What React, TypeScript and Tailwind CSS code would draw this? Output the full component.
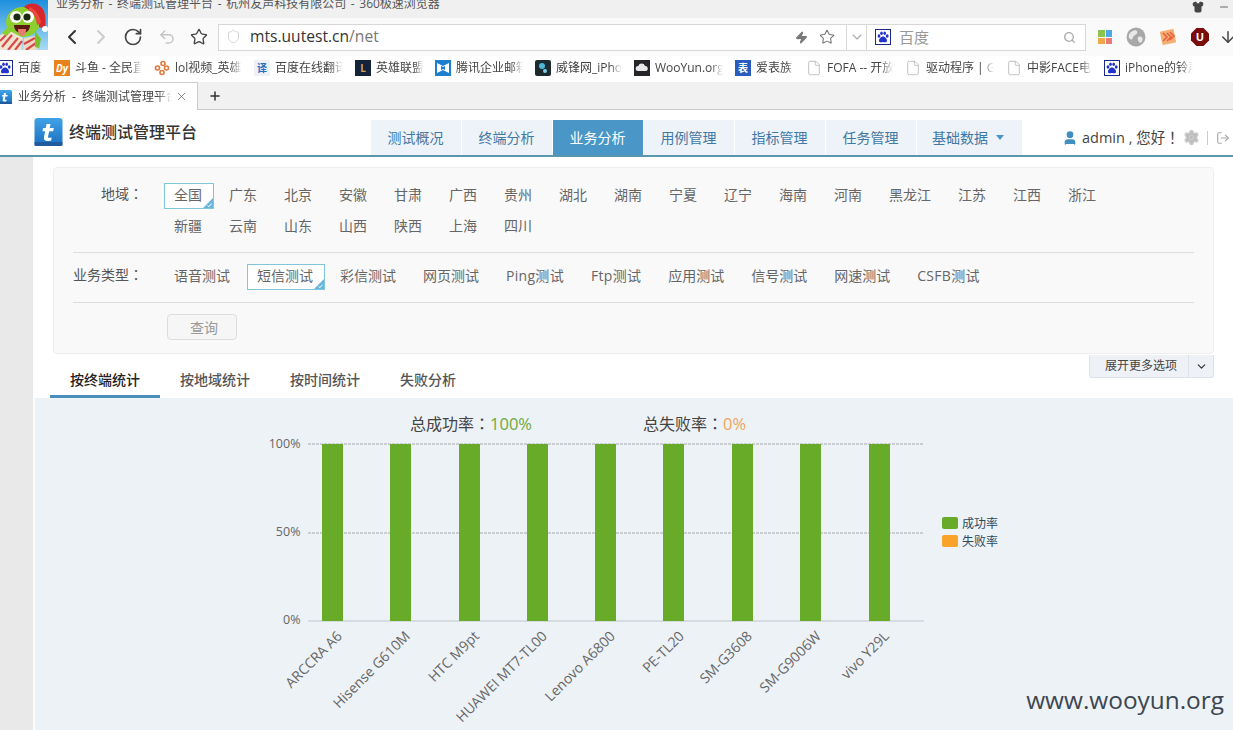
import React from "react";
import { ChevronDown, ChevronLeft, ChevronRight, File, LogOut, Plus, RotateCw, Search, Settings, Shield, Star, Undo2, User, X, Zap, Shirt, Minus, ArrowDown } from "lucide-react";

const Paw = ({ className = "" }: { className?: string }) => (
  <svg viewBox="0 0 16 16" className={className}>
    <rect x="0.5" y="0.5" width="15" height="15" fill="#fff" stroke="#1a2a8c" />
    <g fill="#2233c8">
      <ellipse cx="4" cy="7" rx="1.4" ry="1.8" />
      <ellipse cx="6.5" cy="4.2" rx="1.3" ry="1.8" />
      <ellipse cx="9.7" cy="4.2" rx="1.3" ry="1.8" />
      <ellipse cx="12.2" cy="7" rx="1.4" ry="1.8" />
      <path d="M8 7.5c-2 0-4 2.4-4 4.2 0 1.6 1.6 1.7 4 1.2 2.4.5 4 .4 4-1.2 0-1.8-2-4.2-4-4.2z" />
    </g>
  </svg>
);

const TLogo = ({ className = "" }: { className?: string }) => (
  <svg viewBox="0 0 28 28" className={className}>
    <defs>
      <linearGradient id="tl" x1="0" y1="0" x2="0" y2="1">
        <stop offset="0" stopColor="#3fa3e6" />
        <stop offset="1" stopColor="#1c6fc0" />
      </linearGradient>
    </defs>
    <rect width="28" height="28" rx="3" fill="url(#tl)" />
    <rect y="24" width="28" height="4" rx="1" fill="#1f5c9e" />
    <path d="M12 6h4l-.7 4h4l-.6 3.2h-4l-1.2 5.6c-.2 1 .9 1.2 3.6.6l-.4 3c-5 1.4-8 .4-7.2-3.6l1.2-5.6H8l.6-3.2h2.7z" fill="#fff" />
  </svg>
);

const Box = ({ className, children }: { className: string; children?: React.ReactNode }) => (
  <span className={"flex h-4 w-4 shrink-0 items-center justify-center overflow-hidden text-[10px] leading-none " + className}>{children}</span>
);

const Colon = ({ children = "：" }: { children?: string }) => <span className="font-['Noto_Sans_CJK_TC',sans-serif]">{children}</span>;

const bookmarks: { icon: React.ReactNode; label: string; w: string }[] = [
  { icon: <Paw className="h-4 w-4 shrink-0" />, label: "百度", w: "w-[24px]" },
  { icon: <Box className="bg-[#e8821e] font-bold italic text-white">Dy</Box>, label: "斗鱼 - 全民直播", w: "w-[67px]" },
  {
    icon: (
      <svg viewBox="0 0 16 16" className="h-4 w-4 shrink-0">
        <g fill="none" stroke="#e0783a" strokeWidth="1.6">
          <circle cx="9" cy="3.5" r="2" />
          <circle cx="3.5" cy="8" r="2" />
          <circle cx="12.5" cy="8" r="2" />
          <circle cx="8" cy="12.5" r="2" />
        </g>
      </svg>
    ),
    label: "lol视频_英雄联盟",
    w: "w-[67px]",
  },
  { icon: <Box className="bg-[#eef2f8] font-bold text-[#2a6fc0]">译</Box>, label: "百度在线翻译", w: "w-[68px]" },
  { icon: <Box className="bg-[#14233c] font-bold text-[#d0a850]">L</Box>, label: "英雄联盟", w: "w-[47px]" },
  {
    icon: (
      <svg viewBox="0 0 16 16" className="h-4 w-4 shrink-0">
        <rect width="16" height="16" fill="#1c7fd0" />
        <path d="M2 3l6 3 6-3v10l-6-3-6 3z" fill="#fff" />
        <path d="M6 6l2 1 2-1v4l-2-1-2 1z" fill="#1c7fd0" />
      </svg>
    ),
    label: "腾讯企业邮箱",
    w: "w-[67px]",
  },
  {
    icon: (
      <svg viewBox="0 0 16 16" className="h-4 w-4 shrink-0">
        <rect width="16" height="16" rx="2" fill="#1d2a30" />
        <circle cx="7" cy="6" r="3" fill="#4fb8d8" />
        <circle cx="10" cy="11" r="2" fill="#7fd0e4" />
      </svg>
    ),
    label: "威锋网_iPhone",
    w: "w-[66px]",
  },
  {
    icon: (
      <svg viewBox="0 0 16 16" className="h-4 w-4 shrink-0">
        <rect width="16" height="16" fill="#26262a" />
        <path d="M4 11a2.5 2.5 0 0 1 .3-5A3.5 3.5 0 0 1 11 6a2.5 2.5 0 0 1 .5 5z" fill="#e8e8e8" />
      </svg>
    ),
    label: "WooYun.org",
    w: "w-[68px]",
  },
  { icon: <Box className="bg-[#2a5cc0] font-bold text-white">表</Box>, label: "爱表族", w: "w-[38px]" },
  { icon: <File className="h-4 w-4 shrink-0 text-[#bbbbbb]" strokeWidth={1.3} />, label: "FOFA -- 开放", w: "w-[66px]" },
  { icon: <File className="h-4 w-4 shrink-0 text-[#bbbbbb]" strokeWidth={1.3} />, label: "驱动程序 | GeForce", w: "w-[68px]" },
  { icon: <File className="h-4 w-4 shrink-0 text-[#bbbbbb]" strokeWidth={1.3} />, label: "中影FACE电影", w: "w-[65px]" },
  { icon: <Paw className="h-4 w-4 shrink-0" />, label: "iPhone的铃声", w: "w-[68px]" },
];

const navItems = ["测试概况", "终端分析", "业务分析", "用例管理", "指标管理", "任务管理"];
const regionRows = ["全国", "广东", "北京", "安徽", "甘肃", "广西", "贵州", "湖北", "湖南", "宁夏", "辽宁", "海南", "河南", "黑龙江", "江苏", "江西", "浙江", "新疆", "云南", "山东", "山西", "陕西", "上海", "四川"];
const types = ["语音测试", "短信测试", "彩信测试", "网页测试", "Ping测试", "Ftp测试", "应用测试", "信号测试", "网速测试", "CSFB测试"];
const bars: [number, number, string][] = [
  [322, 332, "ARCCRA A6"],
  [390, 400, "Hisense G610M"],
  [459, 469, "HTC M9pt"],
  [527, 537, "HUAWEI MT7-TL00"],
  [595, 605, "Lenovo A6800"],
  [663, 674, "PE-TL20"],
  [732, 742, "SM-G3608"],
  [800, 811, "SM-G9006W"],
  [869, 879, "vivo Y29L"],
];

const Chip = ({ label, active }: { label: string; active?: boolean }) => (
  <span className={"relative flex h-[26px] items-center border pb-[3px] pl-[9px] pr-[11px] text-[14px] text-[#666] " + (active ? "border-[#7fc6dc] bg-white " : "border-transparent ") + (/[A-Za-z]/.test(label) ? "tracking-[0.3px]" : "")}>
    {label}
    {active && (
      <>
        <span className="absolute bottom-0 right-0 h-0 w-0 border-b-[10px] border-l-[10px] border-b-[#68b6de] border-l-transparent" />
        <svg viewBox="0 0 10 10" className="absolute bottom-0 right-0 h-[10px] w-[10px]">
          <path d="M4.5 7.5l1.4 1.2 2.6-3" fill="none" stroke="#fff" strokeWidth="1" />
        </svg>
      </>
    )}
  </span>
);

const Avatar = () => (
  <svg viewBox="0 0 48 50" className="absolute left-0 top-0 h-[50px] w-[48px]">
    <defs>
      <linearGradient id="sky" x1="0" y1="0" x2="0" y2="1">
        <stop offset="0" stopColor="#1d8fdc" />
        <stop offset="1" stopColor="#a8dcf4" />
      </linearGradient>
    </defs>
    <rect width="48" height="50" fill="url(#sky)" />
    <ellipse cx="23" cy="22" rx="17" ry="15" fill="#8ccf2e" />
    <path d="M24 7c6-6 16-4 20 4 2 6 2 13 1 18l-6-2c1-8-4-14-15-20z" fill="#d8262c" />
    <path d="M30 7c5 2 10 8 11 16l-4 2c-1-8-4-12-9-15z" fill="#e84a3c" />
    <circle cx="45" cy="29" r="3" fill="#fff" />
    <circle cx="16" cy="17" r="6" fill="#fff" />
    <circle cx="28" cy="17" r="6" fill="#fff" />
    <circle cx="17" cy="17" r="3.6" fill="#1c2a10" />
    <circle cx="27" cy="17" r="3.6" fill="#1c2a10" />
    <path d="M14 25h16c0 5-3 8-8 8s-8-3-8-8z" fill="#5a1a10" />
    <path d="M18 29h8c0 5-2 7-4 7s-4-2-4-7z" fill="#e87a70" />
    <path d="M0 35l10-4 13 7-2 12H0z" fill="#f0e4d0" />
    <path d="M0 41l8-8M2 47l10-12M8 50l10-12M15 50l7-9" stroke="#d84a4a" strokeWidth="2.2" />
    <path d="M24 38l11-2 2 14H23z" fill="#ecdcc4" />
    <path d="M24 44l11-6M26 50l10-7" stroke="#d84a4a" strokeWidth="2.2" />
    <path d="M35 31l6 8-2 9-4-1z" fill="#7cc02a" />
    <path d="M8 27l-6 6 4 3 6-5z" fill="#8ccf2e" />
  </svg>
);

export default function App() {
  return (
    <div className="relative flex h-[730px] w-[1233px] flex-col overflow-hidden bg-white font-['Open_Sans','Noto_Sans_CJK_SC',sans-serif] text-[#444]">
      <div className="flex h-[18px] shrink-0 items-start justify-between bg-[#f0f0f0] pl-[56px] pr-[3px]">
        <span className="text-[12px] leading-[8px] text-[#555] [word-spacing:1.5px]">业务分析 - 终端测试管理平台 - 杭州友声科技有限公司 - 360极速浏览器</span>
        <div className="flex items-center gap-[14px] pt-px">
          <Shirt className="h-3 w-3 fill-[#444] text-[#444]" />
          <Minus className="h-3 w-3 text-[#666]" />
        </div>
      </div>

      <div className="flex h-[38px] shrink-0 items-center overflow-hidden bg-[#fafafa] pl-[60px]">
        <ChevronLeft className="h-[26px] w-[24px] shrink-0 text-[#333]" strokeWidth={2} />
        <ChevronRight className="ml-[5px] h-[26px] w-[24px] shrink-0 text-[#ccc]" strokeWidth={2} />
        <RotateCw className="ml-[10px] h-[20px] w-[20px] shrink-0 text-[#444]" strokeWidth={2} />
        <Undo2 className="ml-[15px] h-[18px] w-[18px] shrink-0 text-[#c4c4c4]" strokeWidth={2} />
        <Star className="ml-[14px] h-[18px] w-[18px] shrink-0 text-[#444]" strokeWidth={1.8} />
        <div className="ml-[10px] flex h-[27px] w-[868px] shrink-0 items-center border border-[#d8d8d8] bg-white">
          <div className="flex flex-1 items-center pl-[7px]">
            <Shield className="h-[15px] w-[15px] text-[#d0d0d0]" strokeWidth={1.4} />
            <span className="ml-[9px] text-[15.6px] text-[#333]">
              mts.uutest.cn<span className="text-[#777]">/net</span>
            </span>
          </div>
          <Zap className="h-[13px] w-[13px] fill-[#777] text-[#777]" />
          <Star className="ml-[11px] h-[16px] w-[16px] text-[#777]" strokeWidth={1.6} />
          <div className="ml-[11px] flex h-full w-[21px] items-center justify-center border-x border-[#d8d8d8]">
            <ChevronDown className="h-[16px] w-[16px] text-[#aaa]" strokeWidth={1.6} />
          </div>
          <Paw className="ml-[8px] h-[16px] w-[16px]" />
          <span className="ml-[8px] w-[164px] text-[15px] text-[#999]">百度</span>
          <Search className="mr-[9px] h-[13px] w-[13px] text-[#aaa]" strokeWidth={2.4} />
        </div>
        <div className="ml-[12px] grid h-[14px] w-[14px] shrink-0 grid-cols-2 gap-px">
          <span className="bg-[#8ac44a]" />
          <span className="bg-[#4aa8e8]" />
          <span className="bg-[#f0a848]" />
          <span className="bg-[#e87a78]" />
        </div>
        <svg viewBox="0 0 18 18" className="ml-[14px] h-[20px] w-[20px] shrink-0">
          <circle cx="9" cy="9" r="8.5" fill="#a8a8a8" />
          <path d="M4 5c2-2 5-3 6-1s-2 3-3 4-1 4-3 3-2-4 0-6zM11 9c2-1 4 0 4 2s-2 4-3 3-2-4-1-5z" fill="#e8e8e8" />
        </svg>
        <svg viewBox="0 0 18 18" className="ml-[13px] h-[18px] w-[18px] shrink-0">
          <rect x="2" y="2" width="14" height="14" rx="1" fill="#f4b074" transform="rotate(-12 9 9)" />
          <path d="M4 5l4 4-4 4M8 5l4 4-4 4M11 4l4 4-4 4" fill="none" stroke="#e8603c" strokeWidth="1.6" />
        </svg>
        <svg viewBox="0 0 18 18" className="ml-[14px] h-[18px] w-[18px] shrink-0">
          <path d="M5.5 0h7L18 5.5v7L12.5 18h-7L0 12.5v-7z" fill="#7a0c0c" />
          <text x="9" y="13" textAnchor="middle" fontSize="11" fontWeight="700" fill="#fff">U</text>
        </svg>
        <ArrowDown className="ml-[10px] h-[18px] w-[18px] shrink-0 text-[#444]" strokeWidth={2} />
      </div>

      <div className="flex h-[26px] shrink-0 items-center overflow-hidden bg-white pb-[3px]">
        <div className="-ml-[3px] flex items-center gap-[12px]">
          {bookmarks.map((b) => (
            <div key={b.label} className="flex shrink-0 items-center gap-[5px]">
              {b.icon}
              <span className={"overflow-hidden whitespace-nowrap text-[12px] leading-[16px] text-[#444] [mask-image:linear-gradient(to_right,black_82%,transparent)] " + b.w}>{b.label}</span>
            </div>
          ))}
        </div>
      </div>

      <div className="flex h-[28px] shrink-0 items-center border-b border-[#cccccc] bg-[#f1f1f1]">
        <div className="-mb-px flex h-[28px] w-[198px] items-center border-r border-t border-[#cccccc] bg-white">
          <TLogo className="-ml-[2px] h-[14px] w-[14px]" />
          <span className="ml-[6px] w-[154px] overflow-hidden whitespace-nowrap text-[12px] text-[#444] [word-spacing:3px] [mask-image:linear-gradient(to_right,black_90%,transparent)]">业务分析 - 终端测试管理平台 - 杭州</span>
          <X className="ml-[3px] h-[13px] w-[13px] text-[#777]" strokeWidth={1.6} />
        </div>
        <Plus className="ml-[10px] h-[14px] w-[14px] text-[#333]" strokeWidth={2.6} />
      </div>

      <div className="flex h-[47px] shrink-0 items-end border-b-[2px] border-[#5b97ac] bg-white">
        <div className="flex h-full w-[371px] items-center pl-[34px]">
          <TLogo className="mb-[2px] h-[28px] w-[29px]" />
          <span className="ml-[6px] mb-[2px] text-[16px] font-medium text-[#333]">终端测试管理平台</span>
        </div>
        <div className="flex h-[35px] gap-px">
          {navItems.map((n) => (
            <span key={n} className={"flex h-full w-[90px] items-center justify-center pr-px text-[14px] " + (n === "业务分析" ? "bg-[#4a97c7] text-white" : "bg-[#edf3f8] text-[#3f78a4]")}>
              {n}
            </span>
          ))}
          <span className="flex h-full w-[105px] items-center gap-[8px] bg-[#edf3f8] pl-[15px] text-[14px] text-[#3f78a4]">
            基础数据
            <span className="h-0 w-0 border-x-[4.5px] border-t-[5px] border-x-transparent border-t-[#4a97c7]" />
          </span>
        </div>
        <div className="flex h-[35px] flex-1 items-center pl-[40px]">
          <User className="h-[16px] w-[16px] fill-[#3f8fc0] text-[#3f8fc0]" />
          <span className="ml-[4px] w-[94px] shrink-0 whitespace-nowrap text-[14.5px] text-[#444]">admin , 您好<Colon>！</Colon></span>
          <Settings className="ml-[7px] h-[17px] w-[17px] shrink-0 fill-[#bbb] text-[#ccc]" />
          <span className="ml-[7px] h-[14px] w-px shrink-0 bg-[#ccc]" />
          <LogOut className="ml-[8px] h-[14px] w-[14px] shrink-0 text-[#aaa]" strokeWidth={2} />
        </div>
      </div>

      <div className="flex min-h-0 flex-1">
        <div className="w-[35px] shrink-0 border-r-[2px] border-[#fdfdfd] bg-[#e9e9e9]" />
        <div className="flex min-w-0 flex-1 flex-col">
          <div className="ml-[18px] mr-[19px] mt-[10px] rounded-[4px] border border-[#eeeeee] bg-[#f9f9f9] px-[19px] pb-[13px] pt-[15px]">
            <div className="flex">
              <span className="w-[70px] pt-px text-right text-[14px] leading-[18px] text-[#555]">地域<Colon /></span>
              <div className="ml-[21px] flex w-[950px] flex-wrap gap-[5px]">
                {regionRows.map((r) => (
                  <Chip key={r} label={r} active={r === "全国"} />
                ))}
              </div>
            </div>
            <div className="mt-[12px] border-t border-[#dddddd]" />
            <div className="mt-[11px] flex">
              <span className="w-[70px] text-right text-[14px] leading-[20px] text-[#555]">业务类型<Colon /></span>
              <div className="ml-[21px] flex gap-[5px]">
                {types.map((t) => (
                  <Chip key={t} label={t} active={t === "短信测试"} />
                ))}
              </div>
            </div>
            <div className="mt-[12px] border-t border-[#dddddd]" />
            <button className="ml-[94px] mt-[11px] flex h-[26px] w-[70px] items-center justify-center rounded-[4px] border border-[#dddddd] bg-[#f6f6f6] pl-[4px] text-[14px] text-[#999]">查询</button>
          </div>

          <div className="flex h-[44px] shrink-0 items-start justify-between pl-[15px] pr-[19px]">
            <div className="mt-[6px] flex h-[38px]">
              {["按终端统计", "按地域统计", "按时间统计", "失败分析"].map((t, i) => (
                <span key={t} className={"flex h-full items-center border-b-[3px] px-[20px] pt-[3px] text-[14px] font-medium " + (i === 0 ? "border-[#4a8ebc] text-[#222]" : "border-transparent text-[#555]")}>
                  {t}
                </span>
              ))}
            </div>
            <div className="mt-px flex h-[23px] rounded-b-[3px] border border-t-0 border-[#dde3e8] bg-[#eef2f6] text-[12px] text-[#444]">
              <span className="flex w-[98px] items-center justify-center pl-[4px]">展开更多选项</span>
              <span className="flex w-[25px] items-center justify-center border-l border-[#dde3e8]">
                <ChevronDown className="h-[13px] w-[13px] text-[#333]" strokeWidth={2.2} />
              </span>
            </div>
          </div>

          <div className="min-h-0 flex-1 bg-[#edf2f7]">
            <svg viewBox="35 398 1198 332" className="block h-[332px] w-[1198px]">
              <text x="410" y="430" fontSize="16" fill="#444">总成功率<tspan className="font-['Noto_Sans_CJK_TC',sans-serif]">：</tspan><tspan fill="#6fa93c" fontSize="16.5">100%</tspan></text>
              <text x="643" y="430" fontSize="16" fill="#444">总失败率<tspan className="font-['Noto_Sans_CJK_TC',sans-serif]">：</tspan><tspan fill="#f0a45c" fontSize="16.5">0%</tspan></text>

              <line x1="308" x2="924" y1="444" y2="444" stroke="#aaaaaa" strokeDasharray="3 1" />
              <line x1="308" x2="924" y1="533" y2="533" stroke="#aaaaaa" strokeDasharray="3 1" />
              <line x1="308" x2="924" y1="621" y2="621" stroke="#c0c4cc" />

              <g fontSize="12.5" fill="#666" textAnchor="end">
                <text x="300.5" y="448">100%</text>
                <text x="300.5" y="536">50%</text>
                <text x="300.5" y="624">0%</text>
              </g>

              {bars.map(([x, cx, name]) => (
                <g key={name}>
                  <rect x={x} y="444" width="21" height="177" fill="#68ab28" />
                  <text x={cx + 11} y="637" fontSize="14" fill="#666" textAnchor="end" transform={`rotate(-45 ${cx + 11} 637)`}>
                    {name}
                  </text>
                </g>
              ))}

              <rect x="942" y="517" width="16" height="12" rx="2" fill="#68ab28" />
              <text x="962" y="528" fontSize="12" fill="#2c4a60">成功率</text>
              <rect x="942" y="535" width="16" height="12" rx="2" fill="#f8a42a" />
              <text x="962" y="546" fontSize="12" fill="#2c4a60">失败率</text>
            </svg>
          </div>
        </div>
      </div>

      <Avatar />
      <span className="absolute bottom-[13px] right-[9px] text-[24.4px] leading-[34px] text-[#3c4650]">www.wooyun.org</span>
    </div>
  );
}
